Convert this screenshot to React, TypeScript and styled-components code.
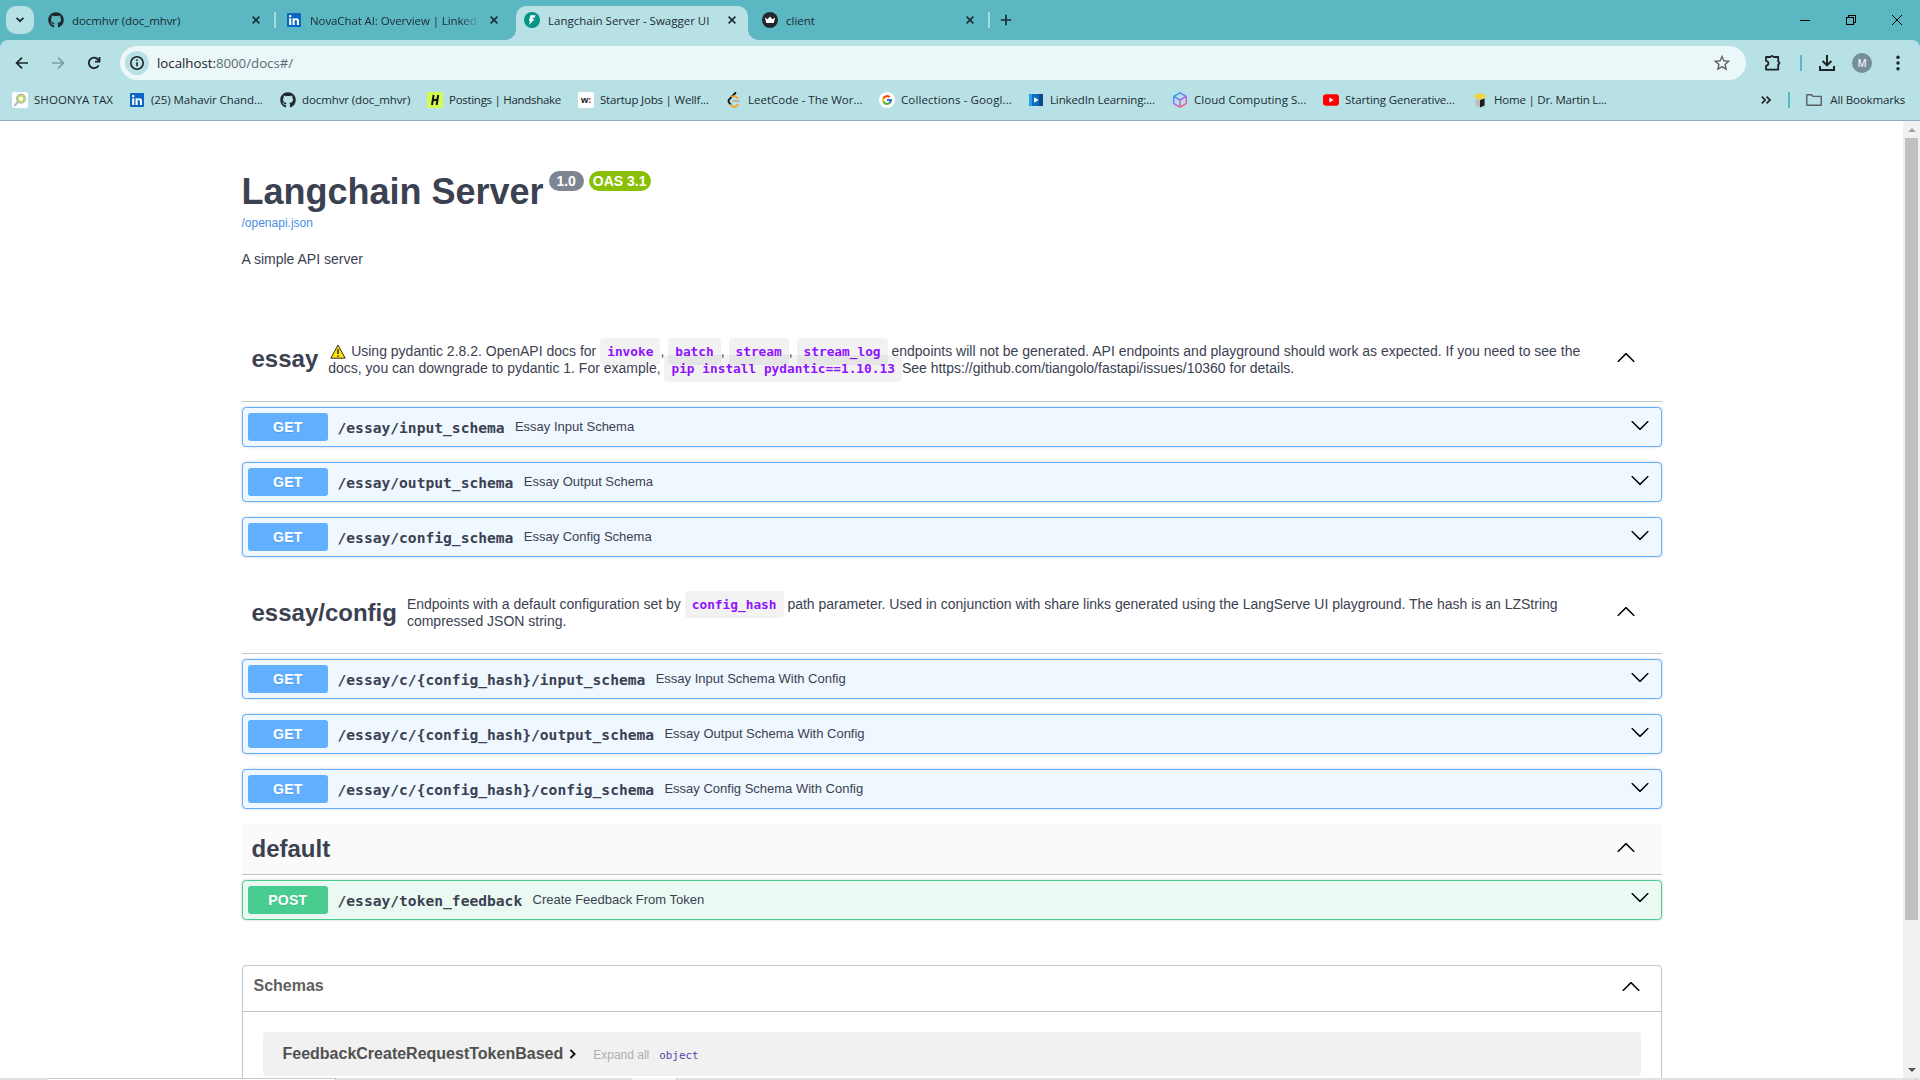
import React from "react";
import styled, { createGlobalStyle, css } from "styled-components";
import { FaGithub, FaLinkedin } from "react-icons/fa";
import { FcGoogle } from "react-icons/fc";

const ui = `"Open Sans", "Noto Sans", sans-serif`;
const sans = `"Liberation Sans", Arial, sans-serif`;
const mono = `"DejaVu Sans Mono", "Liberation Mono", monospace`;

const GlobalStyle = createGlobalStyle`
  * { box-sizing: border-box; }
  body { margin: 0; background: #fff; overflow: hidden; }
`;

const Screen = styled.div`
  width: 1920px;
  height: 1080px;
  display: flex;
  flex-direction: column;
  overflow: hidden;
  font-family: ${sans};
  color: #3b4151;
`;

/* ---------- browser chrome ---------- */

const TabStrip = styled.div`
  flex: none;
  height: 40px;
  display: flex;
  background: #5bb7c1;
  font: 11.5px/16px ${ui};
  color: #1c2b33;
`;

const TabSearch = styled.div`
  width: 28px;
  height: 28px;
  margin: 6px 4px 0 6px;
  border-radius: 10px;
  background: #b8e1e5;
  display: grid;
  place-items: center;
`;

const Tab = styled.div<{ $active?: boolean }>`
  position: relative;
  width: 238px;
  height: 34px;
  margin-top: 6px;
  padding: 0 12px 6px 10px;
  display: flex;
  align-items: center;
  ${(p) =>
    p.$active &&
    css`
      &::before {
        content: "";
        position: absolute;
        inset: 0 4px 0 2px;
        background: #b8e1e5;
        border-radius: 10px 10px 0 0;
      }
    `}
  > * {
    position: relative;
  }
`;

const TabFoot = styled.i<{ $side: "left" | "right" }>`
  && {
    position: absolute;
    bottom: 0;
    width: 10px;
    height: 10px;
    ${(p) => (p.$side === "left" ? "left: -8px;" : "right: -6px;")}
    background: radial-gradient(
      circle at ${(p) => (p.$side === "left" ? "0 0" : "100% 0")},
      transparent 9.5px,
      #b8e1e5 10px
    );
  }
`;

const TabIcon = styled.span`
  width: 16px;
  height: 16px;
  margin-right: 8px;
  display: grid;
  place-items: center;
  color: #1f2a30;
`;

const TabTitle = styled.span<{ $ls?: number; $fade?: boolean }>`
  flex: 1;
  min-width: 0;
  padding-top: 1px;
  overflow: hidden;
  white-space: nowrap;
  letter-spacing: ${(p) => p.$ls ?? 0}px;
  ${(p) =>
    p.$fade &&
    css`
      mask-image: linear-gradient(90deg, #000 150px, transparent 170px);
    `}
`;

const TabClose = styled.span`
  width: 16px;
  height: 16px;
  margin-left: 9px;
  display: grid;
  place-items: center;
`;

const TabDivider = styled.span`
  && {
    position: absolute;
    right: 0;
    top: 6px;
    width: 2px;
    height: 16px;
    background: #a4dbe1;
  }
`;

const NewTab = styled.div`
  width: 28px;
  height: 40px;
  margin-left: 2px;
  display: grid;
  place-items: center;
`;

const WindowButtons = styled.div`
  margin-left: auto;
  display: flex;
  > span {
    width: 46px;
    height: 40px;
    display: grid;
    place-items: center;
  }
`;

const Toolbar = styled.div`
  flex: none;
  height: 46px;
  background: #5bb7c1;
`;

const ToolbarInner = styled.div`
  height: 46px;
  display: flex;
  align-items: center;
  padding-left: 4px;
  background: #b8e1e5;
  border-radius: 8px 8px 0 0;
`;

const ToolButton = styled.span<{ $w?: number }>`
  flex: none;
  width: ${(p) => p.$w ?? 36}px;
  height: 34px;
  display: grid;
  place-items: center;
`;

const Omnibox = styled.div`
  flex: none;
  width: 1626px;
  height: 34px;
  margin-left: 8px;
  padding: 0 14px 0 5px;
  border-radius: 17px;
  background: #ebf7f8;
  display: flex;
  align-items: center;
`;

const SiteInfo = styled.span`
  width: 24px;
  height: 24px;
  border-radius: 50%;
  background: #b8e1e5;
  display: grid;
  place-items: center;
`;

const Url = styled.span`
  flex: 1;
  margin-left: 8px;
  font: 13.3px/20px ${ui};
  letter-spacing: -0.03px;
  color: #1d2327;
  em {
    font-style: normal;
    color: #5d6c70;
  }
`;

const Bar = styled.span<{ $gap?: number }>`
  flex: none;
  width: 2px;
  height: 16px;
  margin: 0 ${(p) => p.$gap ?? 0}px;
  background: #5bb7c1;
`;

const Avatar = styled.span`
  width: 20px;
  height: 20px;
  border-radius: 50%;
  background: #768e9a;
  color: #eef3f4;
  font: 600 10px/20px ${ui};
  text-align: center;
`;

const BookmarkBar = styled.div`
  flex: none;
  height: 35px;
  padding: 0 15px 6px 12px;
  display: flex;
  align-items: center;
  background: #b8e1e5;
  border-bottom: 1px solid #8fb0b8;
  font: 11.5px/16px ${ui};
  color: #1c2b33;
`;

const Bookmark = styled.span<{ $w: number }>`
  width: ${(p) => p.$w}px;
  flex: none;
  display: flex;
  align-items: center;
  white-space: nowrap;
`;

const BookmarkIcon = styled.span`
  width: 16px;
  height: 16px;
  margin-right: 6px;
  display: grid;
  place-items: center;
  color: #1f2a30;
`;

const BookmarkText = styled.span<{ $ls?: number }>`
  letter-spacing: ${(p) => p.$ls ?? 0}px;
`;

const BookmarkEnd = styled.span`
  margin-left: auto;
  display: flex;
  align-items: center;
`;

const IconTile = styled.span<{ $bg: string }>`
  width: 16px;
  height: 16px;
  border-radius: 2px;
  background: ${(p) => p.$bg};
  display: grid;
  place-items: center;
  font: 700 9px/16px ${ui};
  color: #222;
  b { color: #d33; }
`;

/* ---------- page ---------- */

const Viewport = styled.div`
  flex: 1;
  min-height: 0;
  display: flex;
`;

const Page = styled.main`
  width: 1903px;
  padding: 0 241.5px;
  overflow: hidden;
`;

const Info = styled.header`
  height: 200px;
  padding-top: 50px;
`;

const Title = styled.h2`
  margin: 0;
  display: flex;
  align-items: flex-start;
  font-size: 36px;
  line-height: 41px;
  font-weight: 700;
`;

const Version = styled.small<{ $bg: string; $gap: number; $w: number }>`
  width: ${(p) => p.$w}px;
  height: 20px;
  margin: 0 0 0 ${(p) => p.$gap}px;
  border-radius: 10px;
  background: ${(p) => p.$bg};
  color: #fff;
  font-size: 14px;
  line-height: 20px;
  text-align: center;
`;

const SpecLink = styled.a`
  display: block;
  margin-top: 4px;
  font-size: 12px;
  line-height: 14px;
  color: #4990e2;
`;

const Lead = styled.p`
  margin: 21px 0 0;
  font-size: 14px;
  line-height: 17px;
`;

const TagHead = styled.h3<{ $h: number; $shade?: boolean }>`
  height: ${(p) => p.$h}px;
  margin: 0 0 5px;
  padding: 0 26px 0 10px;
  display: flex;
  align-items: center;
  border-bottom: 1px solid rgba(59, 65, 81, 0.3);
  background: ${(p) => (p.$shade ? "#fafafa" : "transparent")};
  font-size: 24px;
  line-height: 28px;
  font-weight: 700;
`;

const TagName = styled.span<{ $lift?: number }>`
  margin-bottom: ${(p) => p.$lift ?? 0}px;
`;

const TagText = styled.p<{ $drop: number }>`
  flex: 1;
  margin: ${(p) => p.$drop}px 30px 0 10px;
  height: 53px;
  font-size: 14px;
  line-height: 17px;
  font-weight: 400;
`;

const Warning = styled.svg`
  margin: 0 1.5px;
  vertical-align: -3px;
`;

const Code = styled.code`
  padding: 6px 7px;
  border-radius: 4px;
  background: rgba(0, 0, 0, 0.05);
  color: #9012fe;
  font: 600 12.8px/1 ${mono};
`;

const Push = styled.span<{ $lift?: number }>`
  margin: 0 0 ${(p) => p.$lift ?? 0}px auto;
  display: grid;
`;

const Operation = styled.div<{ $color: string; $bg: string }>`
  height: 40px;
  margin-bottom: 15px;
  padding: 0 11px 0 5px;
  display: flex;
  align-items: center;
  border: 1px solid ${(p) => p.$color};
  border-radius: 4px;
  background: ${(p) => p.$bg};
  box-shadow: 0 0 3px rgba(0, 0, 0, 0.19);
`;

const Method = styled.span<{ $color: string }>`
  width: 80px;
  height: 28px;
  border-radius: 3px;
  background: ${(p) => p.$color};
  color: #fff;
  text-align: center;
  text-indent: 0.6px;
  text-shadow: 0 1px 0 rgba(0, 0, 0, 0.1);
  font-size: 14px;
  line-height: 28px;
  font-weight: 700;
  letter-spacing: 0.3px;
`;

const Path = styled.span`
  margin: 2px 10px 0;
  font: 700 14.62px/18px ${mono};
`;

const Summary = styled.span`
  margin-left: 0.3px;
  font-size: 13px;
  line-height: 16px;
`;

const Models = styled.section`
  height: 200px;
  margin-top: 45px;
  border: 1px solid rgba(59, 65, 81, 0.3);
  border-radius: 4px;
`;

const ModelsHead = styled.h4`
  height: 46px;
  margin: 0;
  padding: 0 20px 6px 11px;
  display: flex;
  align-items: center;
  border-bottom: 1px solid rgba(59, 65, 81, 0.3);
  color: #606060;
  font-size: 16px;
  line-height: 20px;
`;

const Model = styled.div`
  height: 44px;
  margin: 20px 20px 0;
  padding: 0 20px;
  display: flex;
  align-items: center;
  border-radius: 4px;
  background: #f1f1f1;
`;

const ModelName = styled.b`
  margin-right: 6px;
  color: #505050;
  font-size: 16px;
  line-height: 20px;
`;

const ExpandAll = styled.span`
  margin: 2px 10px 0 16px;
  font-size: 12px;
  color: #afaeae;
`;

const Kind = styled.span`
  margin-top: 3px;
  font: 400 10.9px/14px ${mono};
  color: #4a4aa4;
`;

const Scrollbar = styled.aside`
  width: 17px;
  height: 957px;
  padding: 7px 0 6px;
  display: flex;
  flex-direction: column;
  align-items: center;
  background: #f1f1f1;
`;

const Thumb = styled.div`
  width: 13px;
  height: 782px;
  margin: 6px 0 auto;
  background: #c1c1c1;
`;

const Taskbar = styled.footer`
  flex: none;
  height: 2px;
  display: flex;
  background: #e2e2e2;
`;

const TaskSlot = styled.span<{ $left: number; $w: number; $bg: string; $line: string }>`
  width: ${(p) => p.$w}px;
  margin-left: ${(p) => p.$left}px;
  background: ${(p) => p.$bg};
  border-top: 1px solid ${(p) => p.$line};
  border-right: 1px solid #c4c4c4;
`;

/* ---------- drawings ---------- */

const Chevron = ({ up }: { up?: boolean }) => (
  <svg width="20" height="20" viewBox="0 0 20 20">
    <path
      d={
        up
          ? "M17.418 14.908c.272.268.709.268.979 0s.271-.701 0-.969l-7.908-7.83c-.27-.268-.707-.268-.979 0l-7.908 7.83c-.27.268-.27.701 0 .969.271.268.709.268.979 0L10 7.767l7.418 7.141z"
          : "M17.418 6.109c.272-.268.709-.268.979 0s.271.701 0 .969l-7.908 7.83c-.27.268-.707.268-.979 0l-7.908-7.83c-.27-.268-.27-.701 0-.969.271-.268.709-.268.979 0L10 13.25l7.418-7.141z"
      }
    />
  </svg>
);

const Cross = () => (
  <svg width="10" height="10" viewBox="0 0 10 10" stroke="#1c2b33" strokeWidth="1.6">
    <path d="M1.6 1.6l6.8 6.8M8.4 1.6L1.6 8.4" />
  </svg>
);

const LinkedInMark = styled(FaLinkedin).attrs({ size: 16, color: "#0a66c2" })`
  background: radial-gradient(#fff 60%, transparent 61%);
`;

const FastApiMark = () => (
  <svg width="16" height="16" viewBox="0 0 16 16">
    <circle cx="8" cy="8" r="8" fill="#069486" />
    <path d="M6.6 3.2h5L10.5 5.8H8.9l-.5 1.4h2.2L4.9 13l1.2-3.9H4.8z" fill="#fff" />
  </svg>
);

const CrownMark = () => (
  <svg width="16" height="16" viewBox="0 0 16 16">
    <circle cx="8" cy="8" r="8" fill="#26262f" />
    <path d="M3 5.6l2.6 1.6L8 4.4l2.4 2.8L13 5.6l-1.2 5.4H4.2z" fill="#fff" />
  </svg>
);

const bookmarks: { w: number; text: string; ls: number; icon: React.ReactNode }[] = [
  {
    w: 117, text: "SHOONYA TAX", ls: 0.06,
    icon: (
      <IconTile $bg="#fff">
        <svg width="14" height="14" viewBox="0 0 14 14" fill="none">
          <circle cx="8" cy="5.8" r="4.4" stroke="#a9b0a8" strokeWidth="1.2" />
          <circle cx="8" cy="5.8" r="3" stroke="#b5d94a" strokeWidth="1.5" />
          <path d="M4.8 9.2L1.2 13" stroke="#b9b9b9" strokeWidth="2" />
        </svg>
      </IconTile>
    ),
  },
  { w: 151, text: "(25) Mahavir Chand...", ls: -0.07, icon: <LinkedInMark /> },
  { w: 147, text: "docmhvr (doc_mhvr)", ls: -0.1, icon: <FaGithub size={16} /> },
  {
    w: 151, text: "Postings | Handshake", ls: -0.29,
    icon: (
      <IconTile $bg="#d3fb52">
        <svg width="10" height="12" viewBox="0 0 10 12" stroke="#111" strokeWidth="2">
          <path d="M3.6 1L2 11M8.2 1L6.6 11M2.4 6.4l5.2-1" />
        </svg>
      </IconTile>
    ),
  },
  { w: 148, text: "Startup Jobs | Wellf...", ls: -0.2, icon: <IconTile $bg="#fff"><span>w<b>:</b></span></IconTile> },
  {
    w: 153, text: "LeetCode - The Wor...", ls: 0,
    icon: (
      <svg width="16" height="16" viewBox="0 0 16 16" fill="none" strokeWidth="1.8" strokeLinecap="round">
        <path d="M9.4 1L3.2 7.4Q1.8 9 3.2 10.8L5 12.6" stroke="#111" />
        <path d="M5 12.6l1.6 1.6q1.9 1.4 3.6 0l1.6-1.6M6 4.6q2.6-.9 4 .2l1.6 1.4" stroke="#f9a11b" />
        <path d="M7 9h6" stroke="#b3b3b3" />
      </svg>
    ),
  },
  {
    w: 149, text: "Collections - Googl...", ls: 0.11,
    icon: (
      <svg width="16" height="16" viewBox="0 0 16 16">
        <circle cx="8" cy="8" r="8" fill="#fff" />
        <g transform="translate(2.2 2.2)"><FcGoogle size={11.6} /></g>
      </svg>
    ),
  },
  {
    w: 144, text: "LinkedIn Learning:...", ls: -0.13,
    icon: (
      <svg width="16" height="14" viewBox="0 0 16 14">
        <path d="M1 1h14v12H1z" fill="#0a6bc0" />
        <path d="M1 1h3v12H1z" fill="#2b9fe0" />
        <path d="M11 1h4v12h-4z" fill="#094a86" />
        <path d="M6 4.2l4.6 2.8L6 9.8z" fill="#fff" />
      </svg>
    ),
  },
  {
    w: 151, text: "Cloud Computing S...", ls: 0.04,
    icon: (
      <svg width="16" height="16" viewBox="0 0 16 16" fill="none" strokeWidth="1.5" strokeLinejoin="round">
        <defs>
          <linearGradient id="cube" x1="0.2" y1="0" x2="0.8" y2="1">
            <stop offset="0" stopColor="#1fb0ea" />
            <stop offset="0.5" stopColor="#a76bf0" />
            <stop offset="1" stopColor="#ff5f6d" />
          </linearGradient>
        </defs>
        <path d="M8 .9l6.3 3.6v7L8 15.1l-6.3-3.6v-7zM1.8 4.5L8 8l6.2-3.5M8 8v7" stroke="url(#cube)" />
      </svg>
    ),
  },
  {
    w: 149, text: "Starting Generative...", ls: -0.12,
    icon: (
      <svg width="16" height="12" viewBox="0 0 16 12">
        <rect y="0.3" width="16" height="11.4" rx="3" fill="#f00" />
        <path d="M6.4 3.6l4.2 2.4-4.2 2.4z" fill="#fff" />
      </svg>
    ),
  },
  {
    w: 150, text: "Home | Dr. Martin L...", ls: -0.22,
    icon: (
      <svg width="16" height="16" viewBox="0 0 16 16">
        <path d="M1 3l3 .4L3.6 1l3 1.4L8 .6l1.4 1.8 3-1.4L12 3.4l3-.4-2.4 3.2L8 7.4 3.4 6.2z" fill="#f3d544" />
        <path d="M3.6 6.4L8 8v7.4l-4.4-2z" fill="#b9bcbd" />
        <path d="M8 8l4.6-1.6v7L8 15.4z" fill="#1d1d1f" />
      </svg>
    ),
  },
];

const GET = { name: "GET", color: "#61affe", bg: "#eff7ff", lift: 5 };
const POST = { name: "POST", color: "#49cc90", bg: "#ebf9f3", lift: 7 };

const Op = ({ m, path, children }: { m: typeof GET; path: string; children: string }) => (
  <Operation $color={m.color} $bg={m.bg}>
    <Method $color={m.color}>{m.name}</Method>
    <Path>{path}</Path>
    <Summary>{children}</Summary>
    <Push $lift={m.lift}><Chevron /></Push>
  </Operation>
);

export default function App() {
  return (
    <Screen>
      <GlobalStyle />
      <TabStrip>
        <TabSearch>
          <svg width="10" height="6" viewBox="0 0 10 6" fill="none" stroke="#1c2b33" strokeWidth="1.8"><path d="M1.6 .8L5 4.2 8.4 .8" /></svg>
        </TabSearch>
        <Tab>
          <TabIcon><FaGithub size={16} /></TabIcon>
          <TabTitle $ls={-0.1}>docmhvr (doc_mhvr)</TabTitle>
          <TabClose><Cross /></TabClose>
          <TabDivider />
        </Tab>
        <Tab>
          <TabIcon><LinkedInMark /></TabIcon>
          <TabTitle $fade $ls={-0.1}>NovaChat AI: Overview | LinkedIn</TabTitle>
          <TabClose><Cross /></TabClose>
        </Tab>
        <Tab $active>
          <TabFoot $side="left" />
          <TabFoot $side="right" />
          <TabIcon><FastApiMark /></TabIcon>
          <TabTitle>Langchain Server - Swagger UI</TabTitle>
          <TabClose><Cross /></TabClose>
        </Tab>
        <Tab>
          <TabIcon><CrownMark /></TabIcon>
          <TabTitle>client</TabTitle>
          <TabClose><Cross /></TabClose>
          <TabDivider />
        </Tab>
        <NewTab>
          <svg width="12" height="12" viewBox="0 0 12 12" stroke="#1c2b33" strokeWidth="1.7"><path d="M6 .8v10.4M.8 6h10.4" /></svg>
        </NewTab>
        <WindowButtons>
          <span><svg width="10" height="10" shapeRendering="crispEdges"><path d="M0 5.5h10" stroke="#000" /></svg></span>
          <span><svg width="10" height="10" fill="none" stroke="#000" shapeRendering="crispEdges"><path d="M.5 2.5h7v7h-7zM2.5 2.5v-2h7v7h-2" /></svg></span>
          <span><svg width="10" height="10" stroke="#000"><path d="M0 0l10 10M10 0L0 10" /></svg></span>
        </WindowButtons>
      </TabStrip>

      <Toolbar>
        <ToolbarInner>
          <ToolButton>
            <svg width="16" height="16" viewBox="0 0 16 16" fill="none" stroke="#1c2327" strokeWidth="1.7"><path d="M14 8H3M8 2.6L2.6 8 8 13.4" /></svg>
          </ToolButton>
          <ToolButton>
            <svg width="16" height="16" viewBox="0 0 16 16" fill="none" stroke="#7b9fa5" strokeWidth="1.7"><path d="M2 8h11M8 2.6L13.4 8 8 13.4" /></svg>
          </ToolButton>
          <ToolButton>
            <svg width="16" height="16" viewBox="0 0 16 16" fill="none" stroke="#1c2327" strokeWidth="1.8"><path d="M12.6 10.3A5.2 5.2 0 1 1 12 4.6L13.4 6M13.5 2v4.6H9" /></svg>
          </ToolButton>
          <Omnibox>
            <SiteInfo>
              <svg width="16" height="16" viewBox="0 0 16 16" fill="none" stroke="#1c2327" strokeWidth="1.6"><circle cx="8" cy="8" r="6.2" /><path d="M8 7.2v4M8 4.4v1.6" /></svg>
            </SiteInfo>
            <Url>localhost:<em>8000/docs#/</em></Url>
            <svg width="20" height="20" viewBox="0 0 24 24" fill="#5b5f63"><path d="M22 9.24l-7.19-.62L12 2 9.19 8.63 2 9.24l5.46 4.73L5.82 21 12 17.27 18.18 21l-1.63-7.03L22 9.24zM12 15.4l-3.76 2.27 1-4.28-3.32-2.88 4.38-.38L12 6.1l1.71 4.04 4.38.38-3.32 2.88 1 4.28L12 15.4z" /></svg>
          </Omnibox>
          <ToolButton $w={54}>
            <svg width="18" height="18" viewBox="0 0 18 18" fill="none" stroke="#1c2327" strokeWidth="1.8" strokeLinejoin="round"><path d="M2 3h4.4Q8 .6 9.6 3h4.6v4.4q2.6 1.6 0 3.2v5H2v-3.8q2.4-.6 2.4-2.5T2 6.8z" /></svg>
          </ToolButton>
          <Bar />
          <ToolButton $w={50}>
            <svg width="18" height="18" viewBox="0 0 18 18" fill="none" stroke="#1c2327" strokeWidth="2"><path d="M9 1v10.4M4.6 7L9 11.4 13.4 7M2 12v4h14v-4" /></svg>
          </ToolButton>
          <ToolButton $w={20}><Avatar>M</Avatar></ToolButton>
          <ToolButton $w={52}>
            <svg width="4" height="16" fill="#1c2327"><circle cx="2" cy="2.3" r="1.7" /><circle cx="2" cy="8" r="1.7" /><circle cx="2" cy="13.7" r="1.7" /></svg>
          </ToolButton>
        </ToolbarInner>
      </Toolbar>

      <BookmarkBar>
        {bookmarks.map((b) => (
          <Bookmark key={b.text} $w={b.w}>
            <BookmarkIcon>{b.icon}</BookmarkIcon>
            <BookmarkText $ls={b.ls}>{b.text}</BookmarkText>
          </Bookmark>
        ))}
        <BookmarkEnd>
          <ToolButton $w={28}>
            <svg width="10" height="8" viewBox="0 0 10 8" fill="none" stroke="#1c2327" strokeWidth="1.7"><path d="M.8.6L4.2 4 .8 7.4M5.6.6L9 4 5.6 7.4" /></svg>
          </ToolButton>
          <Bar $gap={8} />
          <ToolButton $w={32}>
            <svg width="16" height="12" viewBox="0 0 16 12" fill="none" stroke="#5b5f63" strokeWidth="1.4" strokeLinejoin="round"><path d="M.8.8h4.8l1.6 1.6h8v8.8H.8z" /></svg>
          </ToolButton>
          <BookmarkText $ls={-0.15}>All Bookmarks</BookmarkText>
        </BookmarkEnd>
      </BookmarkBar>

      <Viewport>
        <Page>
          <Info>
            <Title>
              <span>Langchain Server</span>
              <Version $bg="#7d8492" $gap={5} $w={35}>1.0</Version>
              <Version $bg="#89bf04" $gap={5} $w={62}>OAS 3.1</Version>
            </Title>
            <SpecLink>/openapi.json</SpecLink>
            <Lead>A simple API server</Lead>
          </Info>

          <TagHead $h={81}>
            <TagName $lift={4}>essay</TagName>
            <TagText $drop={16}>
              <Warning width="16" height="15" viewBox="0 0 16 15">
                <path d="M8 1L15.2 14.2H.8z" fill="#ffe000" stroke="#333" strokeWidth="1" strokeLinejoin="round" />
                <path d="M8 5v5M8 11.4v1.5" stroke="#222" strokeWidth="1.4" />
              </Warning>{" "}
              Using pydantic 2.8.2. OpenAPI docs for <Code>invoke</Code>, <Code>batch</Code>, <Code>stream</Code>,{" "}
              <Code>stream_log</Code> endpoints will not be generated. API endpoints and playground should work as
              expected. If you need to see the docs, you can downgrade to pydantic 1. For example,{" "}
              <Code>pip install pydantic==1.10.13</Code>See https://github.com/tiangolo/fastapi/issues/10360 for
              details.
            </TagText>
            <Push $lift={8}><Chevron up /></Push>
          </TagHead>
          <Op m={GET} path="/essay/input_schema">Essay Input Schema</Op>
          <Op m={GET} path="/essay/output_schema">Essay Output Schema</Op>
          <Op m={GET} path="/essay/config_schema">Essay Config Schema</Op>

          <TagHead $h={82}>
            <TagName>essay/config</TagName>
            <TagText $drop={20}>
              Endpoints with a default configuration set by <Code>config_hash</Code> path parameter. Used in
              conjunction with share links generated using the LangServe UI playground. The hash is an LZString compressed
              JSON string.
            </TagText>
            <Push $lift={4}><Chevron up /></Push>
          </TagHead>
          <Op m={GET} path="/essay/c/{config_hash}/input_schema">Essay Input Schema With Config</Op>
          <Op m={GET} path="/essay/c/{config_hash}/output_schema">Essay Output Schema With Config</Op>
          <Op m={GET} path="/essay/c/{config_hash}/config_schema">Essay Config Schema With Config</Op>

          <TagHead $h={51} $shade>
            <TagName>default</TagName>
            <Push $lift={4}><Chevron up /></Push>
          </TagHead>
          <Op m={POST} path="/essay/token_feedback">Create Feedback From Token</Op>

          <Models>
            <ModelsHead>
              Schemas
              <Push><Chevron up /></Push>
            </ModelsHead>
            <Model>
              <ModelName>FeedbackCreateRequestTokenBased</ModelName>
              <svg width="8" height="10" viewBox="0 0 8 10" fill="none" stroke="#111" strokeWidth="1.9"><path d="M1.4 .8L5.6 5 1.4 9.2" /></svg>
              <ExpandAll>Expand all</ExpandAll>
              <Kind>object</Kind>
            </Model>
          </Models>
        </Page>
        <Scrollbar>
          <svg width="8" height="4" fill="#a3a3a3"><path d="M4 0l4 4H0z" /></svg>
          <Thumb />
          <svg width="8" height="4" fill="#505050"><path d="M4 4l4-4H0z" /></svg>
        </Scrollbar>
      </Viewport>
      <Taskbar>
        <TaskSlot $left={48} $w={288} $bg="#fff" $line="#c8c8c8" />
        <TaskSlot $left={296} $w={45} $bg="#f5f5f5" $line="#f5f5f5" />
        <TaskSlot $left={1238} $w={1} $bg="#c4c4c4" $line="#c4c4c4" />
      </Taskbar>
    </Screen>
  );
}
